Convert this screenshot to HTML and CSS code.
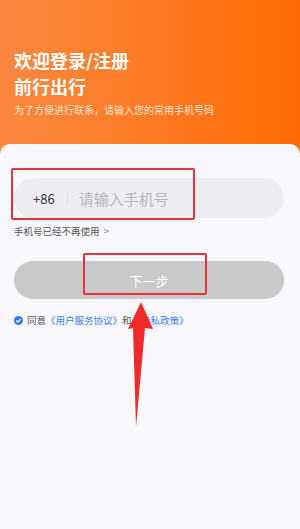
FILE: index.html
```html
<html>
<head>
  <meta name=viewport content='width=300' />
  <link rel="stylesheet" href="styles.css">
</head>
<body>
<div class="page">
  <div class="header">
    <div class="title">欢迎登录/注册</div>
    <div class="title">前行出行</div>
    <div class="sub">为了方便进行联系，请输入您的常用手机号码</div>
  </div>
  <div class="card">
    <div class="phone">
      <span class="code">+86</span>
      <span class="sep"></span>
      <span class="placeholder">请输入手机号</span>
    </div>
    <div class="lost">手机号已经不再使用 <span class="chev">&gt;</span></div>
    <div class="next">下一步</div>
    <div class="agree">
      <svg class="check" width="9" height="9" viewBox="0 0 10 10">
        <circle cx="5" cy="5" r="5" fill="#2f7bf0"/>
        <path d="M2.6 5.1 L4.3 6.7 L7.4 3.5" stroke="#fff" stroke-width="1.3" fill="none" stroke-linecap="round" stroke-linejoin="round"/>
      </svg>
      <span>同意</span><span class="link">《用户服务协议》</span><span>和</span><span class="link">《隐私政策》</span>
    </div>
  </div>
</div>
<div class="mark mark1"></div>
<div class="mark mark2"></div>
<svg class="arrow" width="300" height="529" viewBox="0 0 300 529">
  <polygon points="141,302 153,329 145,328 136,427 133,328 128,329" fill="#f02b2b"/>
</svg>
</body>
</html>
```

FILE: styles.css
```css
body {
  margin: 0;
  font-family: "Noto Sans CJK SC", "Noto Sans", sans-serif;
  background: #f6f6fc;
}
.page {
  min-height: 529px;
  background: linear-gradient(90deg, #fa8840 0%, #fe7a24 50%, #ff6a00 100%);
  display: flex;
  flex-direction: column;
}
.header {
  padding: 47px 14px 0 14px;
  color: #fff;
  height: 97px;
}
.title {
  font-size: 18px;
  font-weight: bold;
  line-height: 26px;
}
.sub {
  font-size: 10px;
  line-height: 14px;
  margin-top: 4px;
  color: #ffe6d6;
}
.card {
  flex: 1;
  background: #f7f7fc;
  border-radius: 10px 10px 0 0;
  padding: 34px 14px 0 14px;
}
.phone {
  height: 40px;
  width: 270px;
  background: #eeeef2;
  border-radius: 20px;
  display: flex;
  align-items: center;
}
.code {
  font-size: 13px;
  color: #333;
  margin-left: 19px;
}
.sep {
  width: 1px;
  height: 12px;
  background: #dcdcdc;
  margin: 0 11px 0 12px;
}
.placeholder {
  font-size: 15px;
  color: #b4b4b8;
}
.lost {
  font-size: 9.5px;
  color: #555;
  margin-top: 6px;
  line-height: 14px;
}
.chev {
  color: #888;
  margin-left: 2px;
}
.next {
  margin-top: 23px;
  width: 270px;
  height: 38px;
  border-radius: 19px;
  background: #c9c9c9;
  color: #fff;
  font-size: 13px;
  display: flex;
  align-items: center;
  justify-content: center;
}
.agree {
  margin-top: 14px;
  font-size: 9.5px;
  color: #555;
  display: flex;
  align-items: center;
  line-height: 14px;
}
.check {
  margin-right: 4px;
}
.link {
  color: #3b82e8;
}
.mark {
  position: absolute;
  border: 2px solid #e8323c;
  border-radius: 2px;
  box-sizing: border-box;
}
.mark1 {
  left: 11px;
  top: 168px;
  width: 184px;
  height: 52px;
}
.mark2 {
  left: 83px;
  top: 253px;
  width: 124px;
  height: 42px;
}
.arrow {
  position: absolute;
  left: 0;
  top: 0;
}
```
